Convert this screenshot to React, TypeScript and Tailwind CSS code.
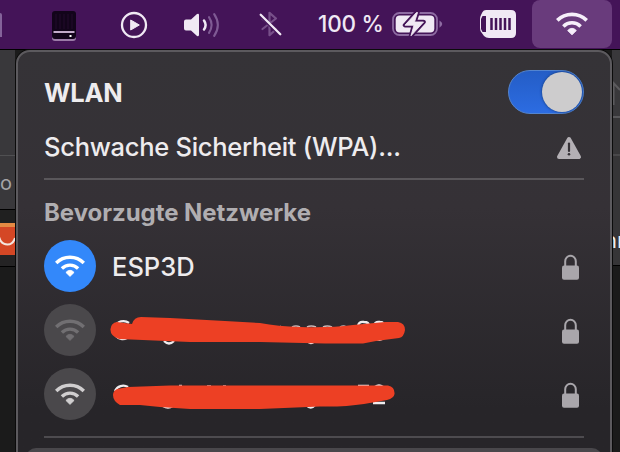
import type { ReactNode } from "react";

function Wifi({ width, color }: { width: number; color: string }) {
  return (
    <svg width={width} height={(width * 22) / 30} viewBox="0 0 30 22" fill="none" stroke={color}>
      <path d="M1.2 7.9 A19.7 19.7 0 0 1 28.8 7.9" strokeWidth="3.5" />
      <path d="M6.9 13.5 A11.5 11.5 0 0 1 23.1 13.5" strokeWidth="3.3" />
      <path d="M10.9 17.4 Q15 13.2 19.1 17.4 L15 21.4Z" fill={color} strokeWidth="0.8" strokeLinejoin="round" />
    </svg>
  );
}

function Lock() {
  return (
    <svg width="18" height="26" viewBox="0 0 18 26" fill="none">
      <path d="M3.2 13 V7.3 a5.3 5.5 0 0 1 10.6 0 V13" stroke="#a9a6ab" strokeWidth="2" />
      <rect x="0" y="11.5" width="17" height="14.3" rx="2" fill="#a9a6ab" />
    </svg>
  );
}

function Network({ circle, wifi, children }: { circle: string; wifi: string; children: ReactNode }) {
  return (
    <div className="flex h-16 items-center">
      <div className={`flex size-[52px] items-center justify-center rounded-full ${circle}`}>
        <Wifi width={30} color={wifi} />
      </div>
      <div className="ml-4 flex h-16 flex-1 items-center">{children}</div>
      <div className="mr-[4px] pt-px">
        <Lock />
      </div>
    </div>
  );
}

function MenuBar() {
  return (
    <header className="flex h-[50px] items-center border-b border-black bg-[#441458] pb-px">
      <div className="mt-px h-6 w-[2px] rounded-tr bg-[#84639a]" />
      <svg className="ml-[49px] mt-[3px]" width="26" height="32" viewBox="0 0 26 32">
        <rect x="1" y="3" width="24" height="28" rx="3" fill="#9b7ba8" />
        <rect x="1" y="1" width="24" height="28" rx="3" fill="#12041a" />
        <path d="M5 4V19M9 4V19M13 4V19M17 4V19M21 4V19" stroke="#220a2c" strokeWidth="1" />
        <rect x="2.5" y="21" width="21" height="2" fill="#c2aaca" />
        <rect x="18.5" y="25" width="2" height="2" fill="#fff" />
      </svg>
      <svg className="ml-[43px] mt-[2px]" width="28" height="28" viewBox="0 0 28 28">
        <circle cx="14" cy="14" r="12" fill="none" stroke="#f0e9f4" strokeWidth="2.3" />
        <path d="M10.7 9 L19.3 14 L10.7 19Z" fill="#f0e9f4" stroke="#f0e9f4" strokeLinejoin="round" />
      </svg>
      <svg className="ml-[35px] mt-px" width="38" height="28" viewBox="0 0 38 28" fill="none" strokeLinecap="round" strokeWidth="2.1">
        <path d="M3 8.5 H8 L14 3.1 Q16 2 16 4.2 V23.8 Q16 26 14 24.9 L8 19.5 H3 Q1 19.5 1 17.5 V10.5 Q1 8.5 3 8.5Z" fill="#f0e9f4" />
        <path d="M21 9.5 Q24.2 14 21 18.5" stroke="#f0e9f4" strokeWidth="2.5" />
        <path d="M26 6.2 Q31.2 14 26 21.8" stroke="#7f5a94" />
        <path d="M31.2 3.2 Q38.5 14 31.2 24.8" stroke="#7f5a94" />
      </svg>
      <svg className="ml-[37px] -mt-px" width="26" height="28" viewBox="0 0 26 28" fill="none" strokeLinecap="round" strokeLinejoin="round">
        <path d="M4.5 19 L18 8.5 L11.5 2.8 V25.2 L18 19.5 L4.5 9" stroke="#775089" strokeWidth="2.2" />
        <path d="M3.4 6.6 L21.7 24.8" stroke="#441458" strokeWidth="3" />
        <path d="M2.7 4.8 L22.3 24.2" stroke="#f0e9f4" strokeWidth="2.3" />
      </svg>
      <span className="ml-[34px] w-[66px] whitespace-nowrap text-[22.5px] font-medium tracking-[-0.2px] text-[#f0e9f4]">100 %</span>
      <svg className="ml-[7px]" width="53" height="28" viewBox="0 0 53 28">
        <rect x="2" y="3" width="44" height="22" rx="6.5" fill="none" stroke="#8e6ba2" strokeWidth="1.8" />
        <rect x="4.7" y="5.5" width="38.6" height="17" rx="4" fill="#f0e9f4" />
        <path d="M48.5 10.5 Q54 14 48.5 17.7Z" fill="#8e6ba2" />
        <path d="M25.5 2.5 L14 15.2 H23 L20 25.8 L32.5 12 H23.5 L26.5 2.5Z" fill="#f0e9f4" stroke="#441458" strokeWidth="4.5" strokeLinejoin="round" />
        <path d="M25.5 2.5 L14 15.2 H23 L20 25.8 L32.5 12 H23.5 L26.5 2.5Z" fill="#f0e9f4" stroke="#f0e9f4" strokeWidth="0.9" strokeLinejoin="round" />
      </svg>
      <svg className="ml-[35px]" width="38" height="30" viewBox="0 0 38 30">
        <path d="M7 1 H32 Q37 1 37 6 V24 Q37 29 32 29 H10 Q7 29 5 27 L2.5 23.5 Q1 22 1 19 V10 Q1 8 2 6 L3.5 3 Q4.5 1 7 1Z" fill="#f0e9f4" />
        <path d="M3.5 7 H7 V23 H3.5 L2 20 V10Z" fill="#441458" />
        <path d="M12.5 9V21M17 9V21M21.5 9V21M26 9V21M30.5 9V21" stroke="#441458" strokeWidth="2.5" />
      </svg>
      <div className="ml-[15px] flex h-12 w-[80px] items-center justify-center rounded-lg bg-[#693b7c] pb-px">
        <Wifi width={32} color="#f6effa" />
      </div>
    </header>
  );
}

function WindowBehind() {
  return (
    <div className="flex h-[402px] justify-between bg-[#1b1b1b]">
      <div className="w-[15px]">
        <div className="h-[106px] border-b border-[#505052] bg-[#39383b]" />
        <div className="flex h-[54px] items-center border-b border-black bg-[#39383b] text-[20px] text-[#a5a4a6]">o</div>
        <div className="h-[13px] bg-[#202020]" />
        <div className="h-8 overflow-hidden border-t-4 border-[#e58a43] bg-[#d44725]">
          <svg width="15" height="28" viewBox="0 0 15 28" fill="none">
            <path d="M-1 10 Q1 17.5 7.5 17.5 Q13 17.5 15 11" stroke="#f3e6df" strokeWidth="2" />
          </svg>
        </div>
        <div className="h-[12px] border-b border-black bg-[#242324]" />
      </div>
      <div className="w-[8px] overflow-hidden">
        <div className="h-[68px] border-b-2 border-[#59585b] bg-[#39383b]">
          <svg width="8" height="66" viewBox="0 0 8 66" fill="none">
            <path d="M1.5 55V33L8 40" stroke="#5c5b5e" strokeWidth="2" />
          </svg>
        </div>
        <div className="h-[38px] border-b-2 border-[#49484a] bg-[#363537]" />
        <div className="flex h-[110px] items-end border-b border-black bg-[#363537] pb-2 text-[22px] text-[#eeeeee]">
          <span className="-ml-2">nr</span>
        </div>
      </div>
    </div>
  );
}

export default function App() {
  return (
    <main className="relative h-[452px] w-[620px] overflow-hidden bg-[#1b1b1b] font-['Inter','Liberation_Sans',sans-serif]">
      <MenuBar />
      <WindowBehind />
      <section className="absolute left-[16px] top-[50px] flex h-[450px] w-[596px] flex-col rounded-[14px] border-2 border-[#5c5a5e] bg-linear-to-b from-[#353337] via-[#353136] via-35% to-[#272529] to-80% px-[26px] shadow-[0_0_0_1px_#0b0b0b]">
        <div className="mt-[16px] flex h-12 items-center justify-between">
          <h1 className="pt-0.5 text-[25.5px] font-[650] tracking-[-0.2px] text-[#eeecee]">WLAN</h1>
          <div className="flex h-11 w-[76px] items-center justify-end rounded-full border border-[#5384cf] bg-linear-to-b from-[#245dc6] to-[#2c6ce2] pr-px">
            <div className="size-10 rounded-full bg-[#cdcccd] shadow-[0_0_3px_#123773]" />
          </div>
        </div>
        <div className="mt-[7px] flex h-12 items-center justify-between">
          <span className="text-[25.5px] font-[450] tracking-[-0.28px] text-[#eeecee]">Schwache Sicherheit (WPA)...</span>
          <svg className="mr-[2px] mt-0.5" width="26" height="24" viewBox="0 0 26 24">
            <path d="M13 3 L23 21 H3Z" fill="#b4b0b5" stroke="#b4b0b5" strokeWidth="4" strokeLinejoin="round" />
            <path d="M13 7.5V15" stroke="#353136" strokeWidth="2.2" strokeLinecap="round" />
            <circle cx="13" cy="18.2" r="1.3" fill="#353136" />
          </svg>
        </div>
        <div className="mt-[7px] h-[2px] shrink-0 bg-[#5a575b]" />
        <h2 className="mt-[13px] flex h-10 items-center text-[24px] font-[650] tracking-[-0.05px] text-[#b0aeb1]">Bevorzugte Netzwerke</h2>
        <div className="mt-px">
          <Network circle="bg-[#3388fa]" wifi="#ffffff">
            <span className="pt-0.5 text-[25.5px] font-[450] text-[#eeecee]">ESP3D</span>
          </Network>
          <Network circle="bg-[#4a484b]" wifi="#716f72">
            <svg className="-ml-[4px]" width="302" height="64" viewBox="108 298 302 64" fill="none">
              <path d="M115 327A9 9 0 0 1 129 323M116 336A9 9 0 0 0 127 338M164 341Q169 346 174 341M306 340Q311 346 315 340M358 326Q359 321 364 322Q369 322 369 326M374 326Q375 321 380 322Q384 322 385 327M375 338Q380 342 385 337" stroke="#eeecee" strokeWidth="2.3" />
              <path d="M280 326L282 328M292 327Q296 325 300 327M307 327Q311 325 316 327M323 327Q327 325 332 327M340 327Q344 325 346 327" stroke="#c9b8b8" strokeWidth="1.6" />
              <path d="M117 322 L132 324 Q134 317 141 317 L170 318 L225 321 L260 323 Q278 326.5 300 327 Q330 328 353 325 L385 322 H398 Q405 323 405 330 Q404 337 399 338 L376 341 L363 343.5 H325 L260 342 L190 342 L119 339 Q110 336 110.5 329 Q111 323 117 322Z" fill="#ed4024" />
            </svg>
          </Network>
          <Network circle="bg-[#4a484b]" wifi="#d0cecf">
            <svg className="-ml-[4px]" width="302" height="64" viewBox="108 362 302 64" fill="none">
              <path d="M115 391A9 9 0 0 1 128 387M163 406Q168 409 173 406M306 405Q311 410 315 405M358 386H369M375 387Q379 384 383 387M373 403H385" stroke="#eeecee" strokeWidth="2.3" />
              <path d="M179 385.5H182M207 386H211M223 386H226" stroke="#d8c8c8" strokeWidth="1.5" />
              <path d="M117 389 L128 387 L170 385.5 H388 Q395 387 394.5 394 Q394 398 387 400 L364 404 Q345 407 320 406.5 L260 409 L190 409 L160 407 L140 405 L120 405 Q113 401 113 395 Q113 391 117 389Z" fill="#ed4024" />
            </svg>
          </Network>
        </div>
        <div className="mt-[10px] h-[2px] shrink-0 bg-[#4d4b4f]" />
        <div className="-mx-[18px] mt-[10px] h-10 shrink-0 rounded-t-[10px] bg-[#49474b]" />
      </section>
    </main>
  );
}
